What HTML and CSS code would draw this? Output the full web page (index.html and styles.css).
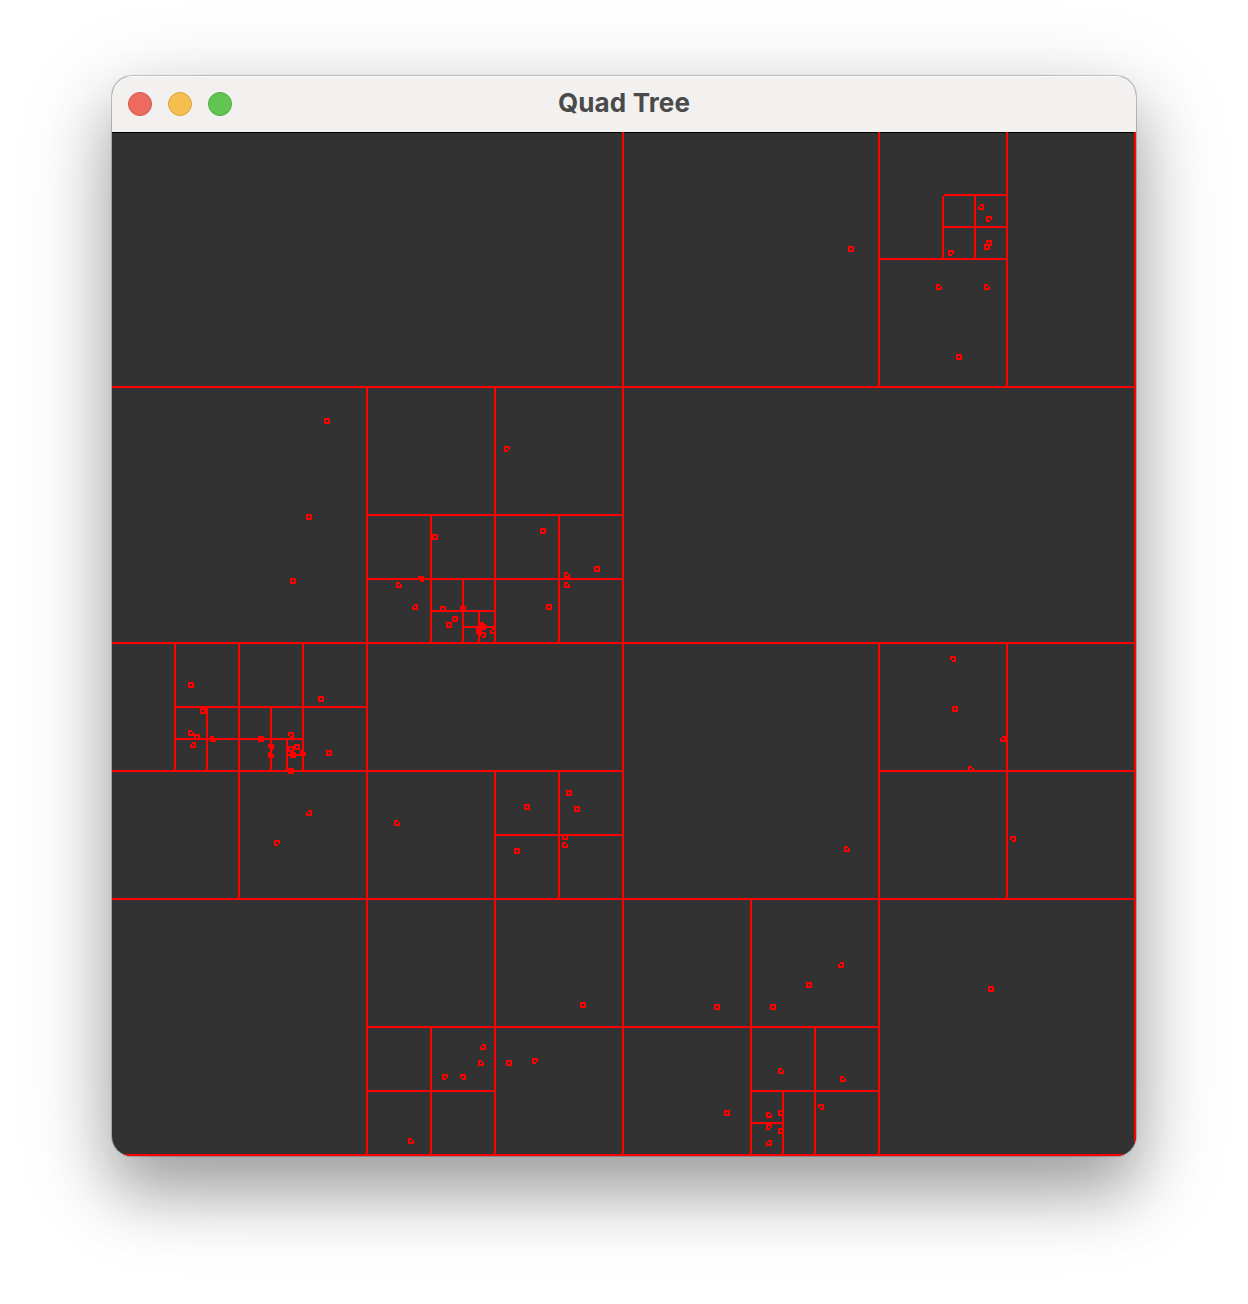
FILE: index.html
```html
<!DOCTYPE html>
<html lang="en">
<head>
<meta charset="utf-8">
<title>Quad Tree</title>
<link rel="stylesheet" href="styles.css">
</head>
<body>
<main class="window">
<header class="titlebar">
<div class="controls"><span class="control close"></span><span class="control minimize"></span><span class="control zoom"></span></div>
<h1 class="title">Quad Tree</h1>
</header>
<svg class="canvas" viewBox="112 132 1024 1024" shape-rendering="crispEdges">
<defs>
<path id="p" d="M-2-2H2V2H-2Z"/>
<path id="tl" d="M0-2H2V2H-2V0"/>
<path id="tr" d="M0-2H-2V2H2V0"/>
<path id="bl" d="M0 2H2V-2H-2V0"/>
<path id="br" d="M0 2H-2V-2H2V0"/>
</defs>
<path class="edge" d="M112 132.5H1136"/>
<g class="cells">
<path d="M112 387H1136M112 643H1136M112 899H1136M112 1155H1136M1135 132V1156M623 132V1156"/>
<path d="M879 132V388M1007 132V388M879 259H1008M943 196V260M975 196V260M944 195H1008M942 227H1008"/>
<path d="M367 386V1156M495 386V644M367 515H624M367 579H624M431 514V644M559 514V644M463 578V644M431 611H496M479 610V644M463 627H496"/>
<path d="M175 642V772M239 642V900M303 642V772M174 707H368M174 739H304M207 706V772M271 706V772M287 738V772M287 755H304M112 771H624"/>
<path d="M495 770V1156M559 770V900M495 835H624M879 642V1156M1007 642V900M879 771H1136"/>
<path d="M366 1027H880M431 1026V1156M366 1091H496M751 898V1156M815 1026V1156M750 1091H880M783 1090V1156M750 1123H784"/>
</g>
<g class="points">
<use href="#p" x="851" y="249"/><use href="#tl" x="981" y="207"/><use href="#br" x="989" y="219"/><use href="#p" x="989" y="243"/><use href="#p" x="987" y="247"/><use href="#br" x="951" y="253"/><use href="#tr" x="939" y="287"/><use href="#tr" x="987" y="287"/><use href="#p" x="959" y="357"/>
<use href="#p" x="327" y="421"/><use href="#p" x="309" y="517"/><use href="#p" x="293" y="581"/><use href="#br" x="507" y="449"/><use href="#p" x="435" y="537"/><use href="#p" x="543" y="531"/><use href="#p" x="597" y="569"/><use href="#tr" x="567" y="575"/><use href="#tr" x="567" y="585"/><use href="#p" x="549" y="607"/>
<use href="#tr" x="399" y="585"/><use href="#bl" x="421" y="579"/><use href="#tl" x="415" y="607"/><use href="#p" x="443" y="609"/><use href="#p" x="463" y="609"/><use href="#p" x="455" y="619"/><use href="#p" x="449" y="625"/><use href="#p" x="481" y="625"/><use href="#p" x="483" y="627"/><use href="#p" x="479" y="631"/><use href="#bl" x="483" y="635"/><use href="#tl" x="493" y="631"/>
<use href="#p" x="191" y="685"/><use href="#p" x="321" y="699"/><use href="#p" x="203" y="711"/><use href="#tr" x="191" y="733"/><use href="#p" x="197" y="737"/><use href="#tl" x="193" y="745"/><use href="#tr" x="213" y="739"/><use href="#p" x="261" y="739"/><use href="#bl" x="291" y="735"/><use href="#bl" x="271" y="747"/><use href="#tr" x="271" y="755"/><use href="#p" x="297" y="747"/><use href="#p" x="291" y="749"/><use href="#p" x="293" y="755"/><use href="#tr" x="303" y="753"/><use href="#p" x="329" y="753"/><use href="#p" x="291" y="771"/>
<use href="#tl" x="309" y="813"/><use href="#br" x="277" y="843"/><use href="#tr" x="397" y="823"/><use href="#p" x="569" y="793"/><use href="#p" x="527" y="807"/><use href="#p" x="577" y="809"/><use href="#p" x="565" y="837"/><use href="#tr" x="565" y="845"/><use href="#p" x="517" y="851"/><use href="#tr" x="847" y="849"/>
<use href="#bl" x="953" y="659"/><use href="#p" x="955" y="709"/><use href="#tl" x="1003" y="739"/><use href="#tr" x="971" y="769"/><use href="#bl" x="1013" y="839"/>
<use href="#p" x="583" y="1005"/><use href="#p" x="717" y="1007"/><use href="#p" x="773" y="1007"/><use href="#p" x="809" y="985"/><use href="#tl" x="841" y="965"/><use href="#p" x="991" y="989"/><use href="#p" x="727" y="1113"/>
<use href="#tl" x="483" y="1047"/><use href="#tr" x="481" y="1063"/><use href="#p" x="509" y="1063"/><use href="#br" x="535" y="1061"/><use href="#br" x="445" y="1077"/><use href="#bl" x="463" y="1077"/><use href="#tr" x="411" y="1141"/>
<use href="#tr" x="781" y="1071"/><use href="#tr" x="843" y="1079"/><use href="#tr" x="769" y="1115"/><use href="#p" x="781" y="1113"/><use href="#bl" x="821" y="1107"/><use href="#br" x="769" y="1127"/><use href="#p" x="781" y="1131"/><use href="#tl" x="769" y="1143"/>
</g>
</svg>
</main>
</body>
</html>
```
FILE: styles.css
```css
body {
  margin: 0;
  min-height: 1304px;
  box-sizing: border-box;
  padding: 76px 112px 148px;
  background: #fff;
  overflow: hidden;
}
.window {
  width: 1024px;
  height: 1080px;
  border-radius: 20px;
  overflow: hidden;
  background: #323232;
  box-shadow: 0 0 0 1px rgba(0, 0, 0, .2), 0 36px 60px rgba(0, 0, 0, .26), 0 24px 100px rgba(0, 0, 0, .2);
}
.titlebar {
  height: 56px;
  box-sizing: border-box;
  padding: 0 16px;
  display: grid;
  grid-template-columns: 1fr auto 1fr;
  align-items: center;
  background: #f3f1ef;
  box-shadow: inset 0 1px #fff;
}
.controls {
  display: flex;
  gap: 16px;
}
.control {
  width: 24px;
  height: 24px;
  box-sizing: border-box;
  border-radius: 50%;
  border: 1px solid;
}
.close { background: #ed6a5e; border-color: #d15549; }
.minimize { background: #f5bf4f; border-color: #d8a03d; }
.zoom { background: #61c554; border-color: #4fa73d; }
.title {
  margin: 0;
  padding-bottom: 3px;
  font: 700 26px/32px Inter, sans-serif;
  color: #4a4a4a;
  letter-spacing: .15px;
}
.canvas {
  display: block;
  width: 1024px;
  height: 1024px;
}
.cells, .points {
  stroke: #f00;
  stroke-width: 2;
  fill: none;
}
.points { stroke-linecap: square; }
.edge { stroke: #000; }
```
